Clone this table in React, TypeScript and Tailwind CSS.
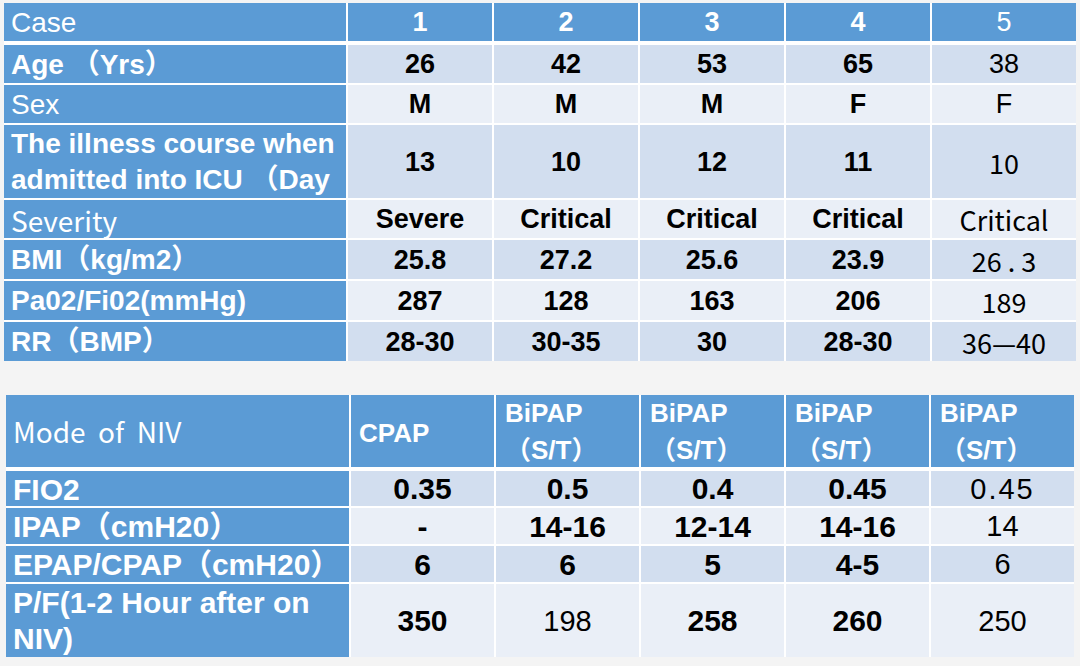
import React from "react";

type Cell = { t: string; b?: boolean; c?: boolean; w?: boolean };

const LAT = "font-['Liberation_Sans','Noto_Sans_CJK_SC',sans-serif]";
const CJK = "font-['Noto_Sans_CJK_SC','Liberation_Sans',sans-serif]";

function Label({ text, b, c, h, size }: { text: string; b?: boolean; c?: boolean; h: string; size: string }) {
  return (
    <div
      className={`bg-[#5b9bd5] text-white flex items-center pl-[7px] pr-1 pt-[1px] overflow-hidden whitespace-pre-line ${size} ${h} ${
        c ? CJK : LAT
      } ${b ? "font-bold" : "font-normal"}`}
    >
      {text}
    </div>
  );
}

function Data({ cell, bg, size }: { cell: Cell; bg: string; size: string }) {
  return (
    <div
      className={`${bg} text-black flex items-center justify-center pt-[1px] whitespace-nowrap leading-none ${size} ${
        cell.c ? CJK : LAT
      } ${cell.b ? "font-bold" : "font-normal"} ${cell.w ? "tracking-[2px]" : ""}`}
    >
      {cell.t}
    </div>
  );
}

const topRows: { label: string; lb?: boolean; lc?: boolean; h: string; cells: Cell[] }[] = [
  {
    label: "Age （Yrs）",
    lb: true,
    h: "h-[38px]",
    cells: [{ t: "26", b: true }, { t: "42", b: true }, { t: "53", b: true }, { t: "65", b: true }, { t: "38" }],
  },
  {
    label: "Sex",
    h: "h-[38px]",
    cells: [{ t: "M", b: true }, { t: "M", b: true }, { t: "M", b: true }, { t: "F", b: true }, { t: "F" }],
  },
  {
    label: "The illness course when\nadmitted into ICU （Day",
    lb: true,
    h: "h-[73px]",
    cells: [{ t: "13", b: true }, { t: "10", b: true }, { t: "12", b: true }, { t: "11", b: true }, { t: "10", c: true }],
  },
  {
    label: "Severity",
    lc: true,
    h: "h-[38px]",
    cells: [
      { t: "Severe", b: true },
      { t: "Critical", b: true },
      { t: "Critical", b: true },
      { t: "Critical", b: true },
      { t: "Critical", c: true },
    ],
  },
  {
    label: "BMI（kg/m2）",
    lb: true,
    h: "h-[39px]",
    cells: [{ t: "25.8", b: true }, { t: "27.2", b: true }, { t: "25.6", b: true }, { t: "23.9", b: true }, { t: "26 . 3", c: true }],
  },
  {
    label: "Pa02/Fi02(mmHg)",
    lb: true,
    h: "h-[39px]",
    cells: [{ t: "287", b: true }, { t: "128", b: true }, { t: "163", b: true }, { t: "206", b: true }, { t: "189", c: true }],
  },
  {
    label: "RR（BMP）",
    lb: true,
    h: "h-[39px]",
    cells: [{ t: "28-30", b: true }, { t: "30-35", b: true }, { t: "30", b: true }, { t: "28-30", b: true }, { t: "36—40", c: true }],
  },
];

const botRows: { label: string; h: string; lead: string; cells: Cell[] }[] = [
  {
    label: "FIO2",
    h: "h-[35px]",
    lead: "leading-[33px]",
    cells: [{ t: "0.35", b: true }, { t: "0.5", b: true }, { t: "0.4", b: true }, { t: "0.45", b: true }, { t: "0.45", w: true }],
  },
  {
    label: "IPAP（cmH20）",
    h: "h-[36px]",
    lead: "leading-[34px]",
    cells: [{ t: "-", b: true }, { t: "14-16", b: true }, { t: "12-14", b: true }, { t: "14-16", b: true }, { t: "14" }],
  },
  {
    label: "EPAP/CPAP（cmH20）",
    h: "h-[36px]",
    lead: "leading-[34px]",
    cells: [{ t: "6", b: true }, { t: "6", b: true }, { t: "5", b: true }, { t: "4-5", b: true }, { t: "6" }],
  },
  {
    label: "P/F(1-2 Hour after on\nNIV)",
    h: "h-[73px]",
    lead: "leading-[36px]",
    cells: [{ t: "350", b: true }, { t: "198" }, { t: "258", b: true }, { t: "260", b: true }, { t: "250" }],
  },
];

export default function App() {
  const topGrid = "grid grid-cols-[342px_repeat(5,minmax(0,1fr))] gap-x-[2px]";
  const botGrid = "grid grid-cols-[343px_repeat(5,minmax(0,1fr))] gap-x-[2px]";
  const ts = "text-[27px]";
  const tl = "text-[28px] leading-[36px]";
  const bh = "text-[26px]";
  return (
    <div className="w-[1080px] h-[666px] bg-[#f4f4f4] overflow-hidden pt-[3px]">
      {/* Top table */}
      <div className="ml-[4px] w-[1072px] bg-white flex flex-col gap-[2px]">
        <div className={`${topGrid} h-[38px] mb-[2px]`}>
          <div className={`bg-[#5b9bd5] text-white flex items-center pl-[7px] pt-[1px] ${tl} ${LAT}`}>Case</div>
          {["1", "2", "3", "4"].map((n) => (
            <div
              key={n}
              className={`bg-[#5b9bd5] text-white flex items-center justify-center pt-[1px] leading-none font-bold ${ts} ${LAT}`}
            >
              {n}
            </div>
          ))}
          <div className={`bg-[#5b9bd5] text-white flex items-center justify-center pt-[1px] leading-none ${ts} ${LAT}`}>
            5
          </div>
        </div>
        {topRows.map((r, i) => (
          <div key={i} className={`${topGrid} ${r.h}`}>
            <Label text={r.label} b={r.lb} c={r.lc} h={r.h} size={tl} />
            {r.cells.map((c, j) => (
              <Data key={j} cell={c} bg={i % 2 === 0 ? "bg-[#d2deef]" : "bg-[#eaeff7]"} size={ts} />
            ))}
          </div>
        ))}
      </div>

      {/* Bottom table */}
      <div className="mt-[34px] ml-[6px] w-[1068px] bg-white flex flex-col gap-[2px]">
        <div className={`${botGrid} h-[72px] mb-[2px]`}>
          <div className={`bg-[#5b9bd5] text-white flex items-center pl-[7px] text-[28px] leading-[36px] ${CJK} whitespace-pre`}>
            {"Mode  of  NIV"}
          </div>
          <div className={`bg-[#5b9bd5] text-white flex items-center pl-[8px] pt-[3px] leading-[36px] font-bold ${bh} ${LAT}`}>
            CPAP
          </div>
          {[0, 1, 2, 3].map((k) => (
            <div key={k} className={`bg-[#5b9bd5] text-white flex flex-col pl-[9px] font-bold ${bh} ${LAT}`}>
              <span className="leading-[36px]">BiPAP</span>
              <span className="leading-[34px] mt-[2px]">（S/T）</span>
            </div>
          ))}
        </div>
        {botRows.map((r, i) => (
          <div key={i} className={`${botGrid} ${r.h}`}>
            <Label text={r.label} b h={r.h} size={`text-[30px] ${r.lead}`} />
            {r.cells.map((c, j) => (
              <Data
                key={j}
                cell={c}
                bg={i % 2 === 0 ? "bg-[#d2deef]" : "bg-[#eaeff7]"}
                size={c.b ? "text-[30px]" : "text-[29px]"}
              />
            ))}
          </div>
        ))}
      </div>
    </div>
  );
}
